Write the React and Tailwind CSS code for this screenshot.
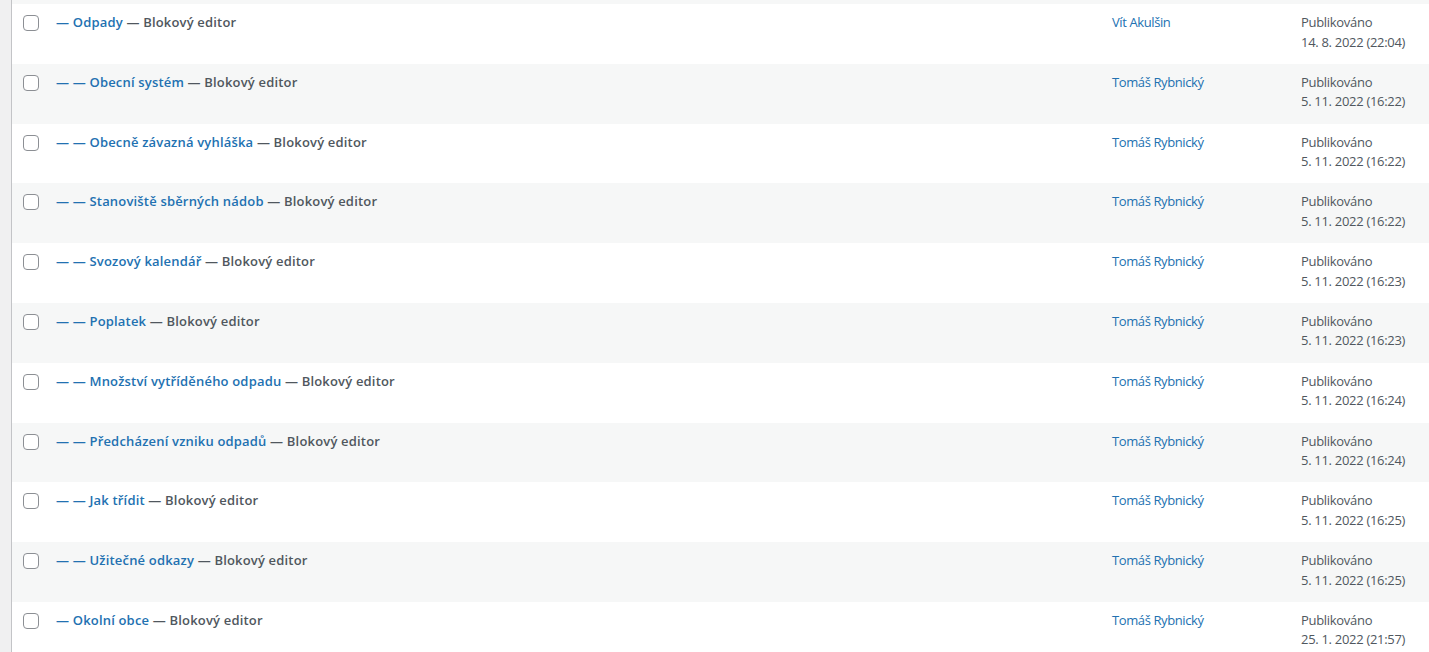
import React from "react";

const rows = [
  { d: "—", t: "Odpady", a: "Vít Akulšin", date: "14. 8. 2022 (22:04)" },
  { d: "— —", t: "Obecní systém", a: "Tomáš Rybnický", date: "5. 11. 2022 (16:22)" },
  { d: "— —", t: "Obecně závazná vyhláška", a: "Tomáš Rybnický", date: "5. 11. 2022 (16:22)" },
  { d: "— —", t: "Stanoviště sběrných nádob", a: "Tomáš Rybnický", date: "5. 11. 2022 (16:22)" },
  { d: "— —", t: "Svozový kalendář", a: "Tomáš Rybnický", date: "5. 11. 2022 (16:23)" },
  { d: "— —", t: "Poplatek", a: "Tomáš Rybnický", date: "5. 11. 2022 (16:23)" },
  { d: "— —", t: "Množství vytříděného odpadu", a: "Tomáš Rybnický", date: "5. 11. 2022 (16:24)" },
  { d: "— —", t: "Předcházení vzniku odpadů", a: "Tomáš Rybnický", date: "5. 11. 2022 (16:24)" },
  { d: "— —", t: "Jak třídit", a: "Tomáš Rybnický", date: "5. 11. 2022 (16:25)" },
  { d: "— —", t: "Užitečné odkazy", a: "Tomáš Rybnický", date: "5. 11. 2022 (16:25)" },
  { d: "—", t: "Okolní obce", a: "Tomáš Rybnický", date: "25. 1. 2022 (21:57)" },
];

export default function App() {
  return (
    <div
      className="w-[1429px] h-[652px] overflow-hidden bg-[#f0f0f1] pl-[11px] text-[13px] leading-[19.5px] text-[#50575e]"
      style={{ fontFamily: '"Open Sans", "Noto Sans", sans-serif' }}
    >
      <div className="h-full border-l border-[#c3c4c7] bg-white">
        <div className="h-[4px] bg-[#f6f7f7]" />
        {rows.map((r, i) => (
          <div
            key={i}
            className={`flex h-[59.8px] items-start ${i % 2 === 1 ? "bg-[#f6f7f7]" : "bg-white"}`}
          >
            <div className="w-[34px] shrink-0 pl-[11px] pt-[11px]">
              <div className="h-[16px] w-[16px] rounded-[4px] border border-[#8c8f94] bg-white" />
            </div>
            <div className="w-[1056px] shrink-0 px-[10px] pt-[9px] font-semibold tracking-[0.18px]">
              <span className="text-[#2271b1]">
                {r.d} {r.t}
              </span>{" "}
              — Blokový editor
            </div>
            <div className="w-[189px] shrink-0 px-[10px] pt-[9px] tracking-[-0.4px] text-[#2271b1]">{r.a}</div>
            <div className="flex-1 px-[10px] pt-[9px] tracking-[-0.3px]">
              <div>Publikováno</div>
              <div>{r.date}</div>
            </div>
          </div>
        ))}
      </div>
    </div>
  );
}
